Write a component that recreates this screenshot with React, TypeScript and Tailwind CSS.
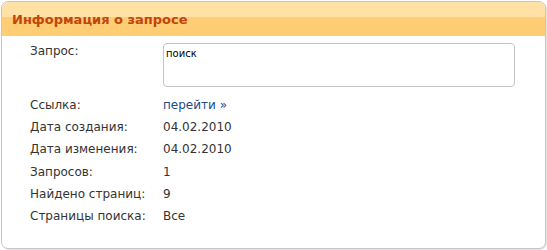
import React from "react";

const rows: [string, React.ReactNode][] = [
  ["Ссылка:", <a className="text-[#1a4c8b] no-underline" href="#">перейти »</a>],
  ["Дата создания:", "04.02.2010"],
  ["Дата изменения:", "04.02.2010"],
  ["Запросов:", "1"],
  ["Найдено страниц:", "9"],
  ["Страницы поиска:", "Все"],
];

export default function App() {
  return (
    <div className="w-[547px] h-[250px] bg-white pl-[1px] pt-[1px]" style={{ fontFamily: '"DejaVu Sans", Verdana, sans-serif' }}>
      <div className="w-[545px] h-[248px] border border-[#c6c6c6] rounded-[7px] overflow-hidden shadow-[1px_1px_0_#e4e4e4] bg-white">
        <div className="h-[34px] flex items-center pl-[10px] pt-[2px] bg-[linear-gradient(to_bottom,#ffe0a5_0,#ffe0a5_15px,#fecd74_15px,#fecd74_100%)]">
          <span className="text-[13px] font-bold text-[#c0460c]">Информация о запросе</span>
        </div>
        <div className="pl-[28px] pt-[7px] text-[12px] text-[#333]">
          <div className="flex">
            <div className="w-[133px] leading-[16px]">Запрос:</div>
            <div className="w-[352px] h-[44px] border border-[#c4c4c4] rounded-[4px] pl-[2px] pt-[3px] text-[10px] leading-[13px] text-black">
              поиск
            </div>
          </div>
          <div className="mt-[7px]">
            {rows.map(([k, v]) => (
              <div key={k} className="flex leading-[22.2px]">
                <div className="w-[133px]">{k}</div>
                <div>{v}</div>
              </div>
            ))}
          </div>
        </div>
      </div>
    </div>
  );
}
